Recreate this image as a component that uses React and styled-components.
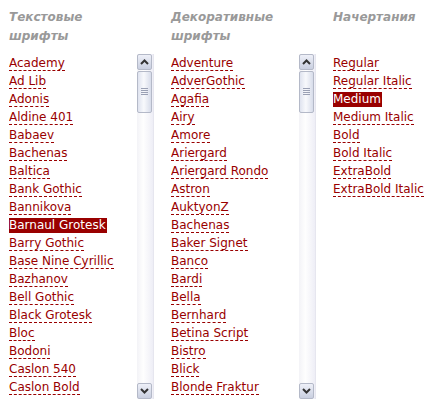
import React from "react";
import styled, { createGlobalStyle } from "styled-components";

const GlobalStyle = createGlobalStyle`
  body {
    margin: 0;
    background: #fff;
    font-family: "DejaVu Sans", Verdana, sans-serif;
  }
`;

const Page = styled.div`
  display: flex;
  padding: 8px 0 0 9px;
`;

const Column = styled.div`
  width: ${(p) => p.$width}px;
  flex-shrink: 0;
`;

const Header = styled.div`
  height: 38px;
  margin-bottom: 8px;
  font-size: 12px;
  line-height: 19px;
  font-weight: bold;
  font-style: italic;
  color: #999;
`;

const Box = styled.div`
  display: flex;
  height: 345px;
`;

const List = styled.ul`
  list-style: none;
  margin: 0;
  padding: 0;
  width: 128px;
  overflow: hidden;
`;

const Item = styled.li`
  font-size: 12px;
  line-height: 18px;
  white-space: nowrap;
`;

const Name = styled.span`
  color: ${(p) => (p.$active ? "#fff" : "#990000")};
  background: ${(p) => (p.$active ? "#990000" : "transparent")};
  border-bottom: 1px dashed ${(p) => (p.$active ? "transparent" : "#990000")};
  padding: ${(p) => (p.$active ? "0 1px 0 0" : "0")};
`;

const Bar = styled.div`
  width: 17px;
  display: flex;
  flex-direction: column;
  background: linear-gradient(to right, #f3f3f7, #fefefe 40%, #eeeef6);
  border-right: 1px solid #e6e6ef;
  box-sizing: border-box;
`;

const Btn = styled.div`
  height: 16px;
  margin: 0 1px 0 0;
  border: 1px solid #b4b9c8;
  border-radius: 2px;
  background: linear-gradient(to bottom, #eef0f8, #c9cfe0);
  display: flex;
  align-items: center;
  justify-content: center;
  box-sizing: border-box;
`;

const Thumb = styled.div`
  height: 42px;
  margin: 1px 1px 0 0;
  border: 1px solid #b4b9c8;
  border-radius: 2px;
  background: linear-gradient(to right, #dfe3ef, #f8f9fc 45%, #d7dcea);
  display: flex;
  align-items: center;
  justify-content: center;
  box-sizing: border-box;
`;

const Track = styled.div`
  flex: 1;
`;

const Arrow = ({ up }) => (
  <svg width="9" height="6" viewBox="0 0 9 6">
    <path
      d={up ? "M1 5 L4.5 1.5 L8 5" : "M1 1 L4.5 4.5 L8 1"}
      fill="none"
      stroke="#333"
      strokeWidth="2"
    />
  </svg>
);

const Grip = () => (
  <svg width="7" height="8" viewBox="0 0 7 8">
    <path d="M0 0.5H7M0 2.5H7M0 4.5H7M0 6.5H7" stroke="#9aa0b4" strokeWidth="1" />
  </svg>
);

const Scrollbar = () => (
  <Bar>
    <Btn>
      <Arrow up />
    </Btn>
    <Thumb>
      <Grip />
    </Thumb>
    <Track />
    <Btn>
      <Arrow />
    </Btn>
  </Bar>
);

const text = [
  "Academy", "Ad Lib", "Adonis", "Aldine 401", "Babaev", "Bachenas", "Baltica",
  "Bank Gothic", "Bannikova", "Barnaul Grotesk", "Barry Gothic", "Base Nine Cyrillic",
  "Bazhanov", "Bell Gothic", "Black Grotesk", "Bloc", "Bodoni", "Caslon 540", "Caslon Bold",
];

const decor = [
  "Adventure", "AdverGothic", "Agafia", "Airy", "Amore", "Ariergard", "Ariergard Rondo",
  "Astron", "AuktyonZ", "Bachenas", "Baker Signet", "Banco", "Bardi", "Bella", "Bernhard",
  "Betina Script", "Bistro", "Blick", "Blonde Fraktur",
];

const styles = [
  "Regular", "Regular Italic", "Medium", "Medium Italic", "Bold", "Bold Italic",
  "ExtraBold", "ExtraBold Italic",
];

const Names = ({ items, active }) => (
  <List>
    {items.map((n) => (
      <Item key={n}>
        <Name $active={n === active}>{n}</Name>
      </Item>
    ))}
  </List>
);

export default function App() {
  return (
    <Page>
      <GlobalStyle />
      <Column $width={162}>
        <Header>Текстовые<br />шрифты</Header>
        <Box>
          <Names items={text} active="Barnaul Grotesk" />
          <Scrollbar />
        </Box>
      </Column>
      <Column $width={162}>
        <Header>Декоративные<br />шрифты</Header>
        <Box>
          <Names items={decor} />
          <Scrollbar />
        </Box>
      </Column>
      <Column $width={104}>
        <Header>Начертания</Header>
        <Box>
          <Names items={styles} active="Medium" />
        </Box>
      </Column>
    </Page>
  );
}
